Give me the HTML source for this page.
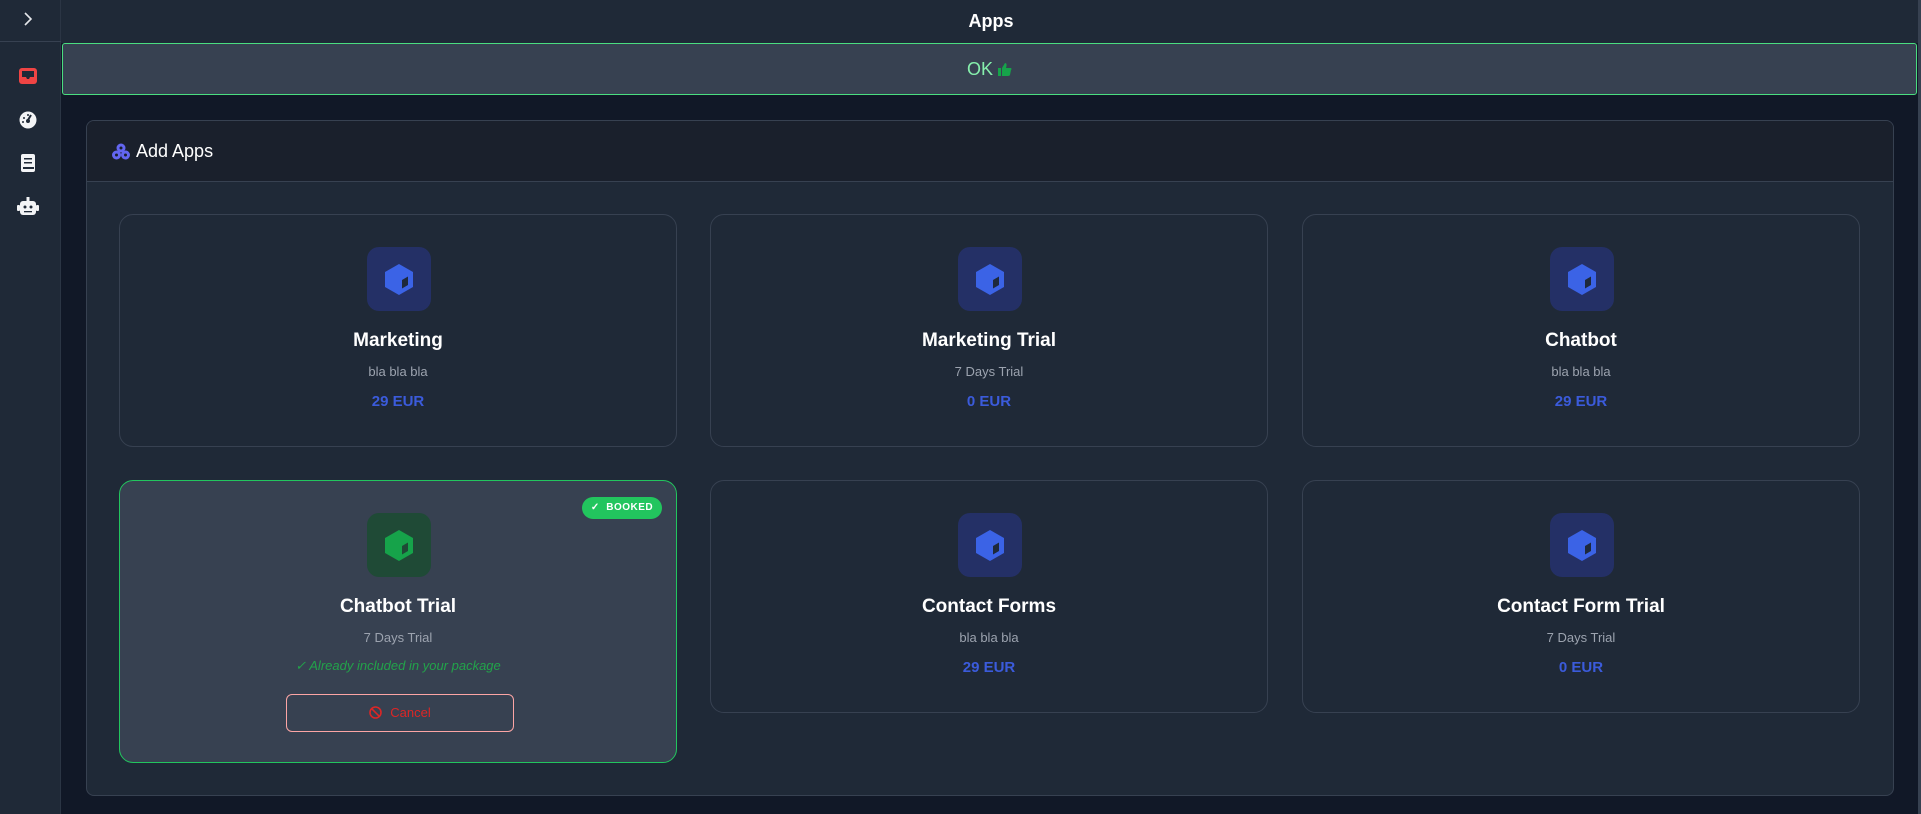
<!DOCTYPE html>
<html><head><meta charset="utf-8"><style>
*{box-sizing:border-box;margin:0;padding:0}
body{width:1921px;height:814px;overflow:hidden;background:#111827;font-family:"Liberation Sans",sans-serif;position:relative;color:#fff}
.abs{position:absolute}
.side{left:0;top:0;width:61px;height:814px;background:#1f2937;border-right:1px solid #2b3544}
.top{left:61px;top:0;width:1860px;height:43px;background:#1f2937}
.banner{left:62px;top:43px;width:1855px;height:52px;background:#374151;border:1px solid #4ade80;border-radius:3px;text-align:center;line-height:50px;color:#86efac;font-size:18px}
.panel{left:86px;top:120px;width:1808px;height:676px;background:#1f2937;border:1px solid #374151;border-radius:8px;overflow:hidden}
.phead{left:0;top:0;width:100%;height:61px;background:#1a202c;border-bottom:1px solid #374151}
.card{position:absolute;width:558px;height:233px;background:#1f2937;border:1px solid #374151;border-radius:14px;text-align:center}
.ib{position:absolute;left:247px;top:32px;width:64px;height:64px;border-radius:12px;background:#243066}
.ib svg{position:absolute;left:18px;top:17px}
.t{position:absolute;left:0;right:0;top:112px;font-size:19px;font-weight:bold;line-height:28px}
.s{position:absolute;left:0;right:0;top:149px;font-size:13px;color:#9ca3af;line-height:16px}
.p{position:absolute;left:0;right:0;top:178px;font-size:15px;font-weight:bold;color:#3b5bdb;line-height:18px}
</style></head><body>
<div class="abs side">
  <svg class="abs" style="left:22px;top:11px" width="12" height="16" viewBox="0 0 12 16"><path d="M3 2 L9 8 L3 14" stroke="#e5e7eb" stroke-width="1.6" fill="none"/></svg>
  <div class="abs" style="left:0;top:41px;width:61px;height:1px;background:#374151"></div>
  <svg class="abs" style="left:19px;top:68px" width="18" height="16" viewBox="0 0 18 16"><rect x="0" y="0" width="18" height="16" rx="3" fill="#ef4444"/><path d="M3 3 H15 V9 H11 L10 11 H8 L7 9 H3Z" fill="#1f2937"/></svg>
  <svg class="abs" style="left:19px;top:111px" width="18" height="18" viewBox="0 0 18 18"><circle cx="9" cy="9" r="8.5" fill="#f3f4f6"/><path d="M9 9 L12 4" stroke="#1f2937" stroke-width="2"/><circle cx="9" cy="10" r="2" fill="#1f2937"/><circle cx="5" cy="7" r="1" fill="#1f2937"/><circle cx="9" cy="4" r="1" fill="#1f2937"/><circle cx="4" cy="11" r="1" fill="#1f2937"/></svg>
  <svg class="abs" style="left:21px;top:154px" width="14" height="18" viewBox="0 0 14 18"><rect x="0" y="0" width="14" height="18" rx="2" fill="#f3f4f6"/><rect x="3" y="4" width="8" height="1.5" fill="#1f2937"/><rect x="3" y="8" width="8" height="1.5" fill="#1f2937"/><rect x="2" y="13" width="11" height="2" fill="#1f2937"/></svg>
  <svg class="abs" style="left:17px;top:197px" width="22" height="18" viewBox="0 0 22 18"><rect x="9.5" y="0" width="3" height="4" fill="#f3f4f6"/><rect x="3" y="4" width="16" height="14" rx="3" fill="#f3f4f6"/><rect x="0" y="8" width="3" height="6" rx="1" fill="#f3f4f6"/><rect x="19" y="8" width="3" height="6" rx="1" fill="#f3f4f6"/><circle cx="8" cy="10" r="1.5" fill="#1f2937"/><circle cx="14" cy="10" r="1.5" fill="#1f2937"/><rect x="7" y="14" width="8" height="1.3" fill="#1f2937"/></svg>
</div>
<div class="abs top"><div style="text-align:center;line-height:42px;font-size:18px;font-weight:bold">Apps</div></div>
<div class="abs banner">OK <svg width="14" height="14" viewBox="0 0 14 14" style="vertical-align:-1px"><rect x="0" y="6" width="3" height="8" fill="#16a34a"/><path d="M4 6 L7 1 Q9 1 8.5 4 L8 6 H13 Q14 7 13 8 L12 13 Q11.5 14 10 14 H4Z" fill="#16a34a"/></svg></div>
<div class="abs panel">
  <div class="abs phead">
    <svg class="abs" style="left:25px;top:22px" width="18" height="17" viewBox="0 0 18 17"><circle cx="9" cy="5" r="4.5" fill="#6366f1"/><circle cx="4.5" cy="12" r="4.5" fill="#6366f1"/><circle cx="13.5" cy="12" r="4.5" fill="#6366f1"/><circle cx="9" cy="5" r="1.5" fill="#1a202c"/><circle cx="4.5" cy="12" r="1.5" fill="#1a202c"/><circle cx="13.5" cy="12" r="1.5" fill="#1a202c"/></svg>
    <div class="abs" style="left:49px;top:19px;font-size:18px;line-height:22px">Add Apps</div>
  </div>

  <div class="card" style="left:32px;top:93px"><div class="ib"><svg width="28" height="31" viewBox="0 0 28 31"><path d="M14 0 L28 8 V23 L14 31 L0 23 V8Z" fill="#3b63e6"/><path d="M17 16 L23 12.5 V21 L17 24.5Z" fill="#1e293b"/></svg></div><div class="t">Marketing</div><div class="s">bla bla bla</div><div class="p">29 EUR</div></div>
  <div class="card" style="left:623px;top:93px"><div class="ib"><svg width="28" height="31" viewBox="0 0 28 31"><path d="M14 0 L28 8 V23 L14 31 L0 23 V8Z" fill="#3b63e6"/><path d="M17 16 L23 12.5 V21 L17 24.5Z" fill="#1e293b"/></svg></div><div class="t">Marketing Trial</div><div class="s">7 Days Trial</div><div class="p">0 EUR</div></div>
  <div class="card" style="left:1215px;top:93px"><div class="ib"><svg width="28" height="31" viewBox="0 0 28 31"><path d="M14 0 L28 8 V23 L14 31 L0 23 V8Z" fill="#3b63e6"/><path d="M17 16 L23 12.5 V21 L17 24.5Z" fill="#1e293b"/></svg></div><div class="t">Chatbot</div><div class="s">bla bla bla</div><div class="p">29 EUR</div></div>

  <div class="card" style="left:32px;top:359px;height:283px;background:#374151;border-color:#22c55e">
    <div class="abs" style="left:462px;top:16px;width:80px;height:22px;border-radius:11px;background:#22c55e;font-size:10px;font-weight:bold;line-height:22px;letter-spacing:.5px">✓&nbsp; BOOKED</div>
    <div class="ib" style="background:#1f4a36"><svg width="28" height="31" viewBox="0 0 28 31"><path d="M14 0 L28 8 V23 L14 31 L0 23 V8Z" fill="#16a34a"/><path d="M17 16 L23 12.5 V21 L17 24.5Z" fill="#1f4a36"/></svg></div>
    <div class="t">Chatbot Trial</div><div class="s">7 Days Trial</div>
    <div class="abs" style="left:0;right:0;top:177px;font-size:13px;font-style:italic;color:#22a34a;line-height:16px">✓ Already included in your package</div>
    <div class="abs" style="left:166px;top:213px;width:228px;height:38px;border:1px solid #fca5a5;border-radius:6px;color:#dc2626;font-size:13px;line-height:36px"><svg width="13" height="13" viewBox="0 0 13 13" style="vertical-align:-2px;margin-right:8px"><circle cx="6.5" cy="6.5" r="5.5" stroke="#dc2626" stroke-width="1.6" fill="none"/><path d="M2.8 2.8 L10.2 10.2" stroke="#dc2626" stroke-width="1.6"/></svg>Cancel</div>
  </div>
  <div class="card" style="left:623px;top:359px"><div class="ib"><svg width="28" height="31" viewBox="0 0 28 31"><path d="M14 0 L28 8 V23 L14 31 L0 23 V8Z" fill="#3b63e6"/><path d="M17 16 L23 12.5 V21 L17 24.5Z" fill="#1e293b"/></svg></div><div class="t">Contact Forms</div><div class="s">bla bla bla</div><div class="p">29 EUR</div></div>
  <div class="card" style="left:1215px;top:359px"><div class="ib"><svg width="28" height="31" viewBox="0 0 28 31"><path d="M14 0 L28 8 V23 L14 31 L0 23 V8Z" fill="#3b63e6"/><path d="M17 16 L23 12.5 V21 L17 24.5Z" fill="#1e293b"/></svg></div><div class="t">Contact Form Trial</div><div class="s">7 Days Trial</div><div class="p">0 EUR</div></div>
</div>
<div class="abs" style="left:1918px;top:0;width:3px;height:814px;background:#374151"></div>
</body></html>
